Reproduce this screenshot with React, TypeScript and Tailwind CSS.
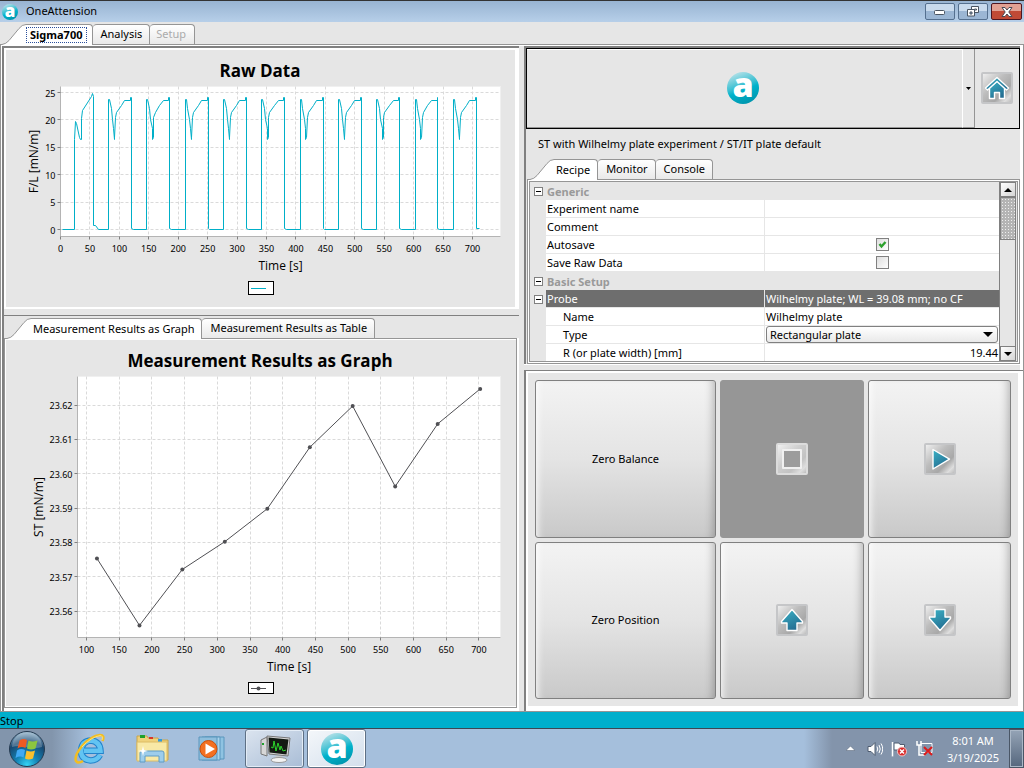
import type { ReactNode } from "react";

const Logo = ({ size, id }: { size: number; id: string }) => (
  <svg width={size} height={size} viewBox="0 0 32 32" className="block shrink-0 overflow-visible">
    <defs>
      <linearGradient id={id} x1="0.2" y1="0" x2="0.6" y2="1">
        <stop offset="0" stopColor="#c0e4ea" />
        <stop offset="0.45" stopColor="#3cc0d2" />
        <stop offset="0.6" stopColor="#00b2cb" />
        <stop offset="1" stopColor="#0096ae" />
      </linearGradient>
    </defs>
    <circle cx="16" cy="16" r="16" fill={`url(#${id})`} />
    <text
      x="16"
      y="25"
      textAnchor="middle"
      fontSize="34"
      fontWeight="800"
      fill="#fff"
      fontFamily="Open Sans, Noto Sans, sans-serif"
    >
      a
    </text>
  </svg>
);

const IconTile = ({ id, muted, children }: { id: string; muted?: boolean; children: ReactNode }) => (
  <svg width="32" height="32" viewBox="0 0 32 32" className="block shrink-0">
    <defs>
      <linearGradient id={`${id}-bg`} x1="0" y1="0" x2="1" y2="1">
        <stop offset="0" stopColor="#f2f2f2" />
        <stop offset="0.4" stopColor={muted ? "#cfcfcf" : "#bdbdbd"} />
        <stop offset="0.68" stopColor={muted ? "#c2c2c2" : "#a8a8a8"} />
        <stop offset="0.85" stopColor="#dedede" />
        <stop offset="1" stopColor="#b4b4b4" />
      </linearGradient>
      <linearGradient id={`${id}-fg`} x1="0" y1="0" x2="0.5" y2="1">
        <stop offset="0" stopColor="#3bb3c6" />
        <stop offset="1" stopColor="#256f93" />
      </linearGradient>
    </defs>
    <rect
      x="1"
      y="1"
      width="30"
      height="30"
      rx="1"
      fill={`url(#${id}-bg)`}
      stroke={muted ? "#dcdcdc" : "#c5c6c8"}
      strokeWidth="2"
    />
    <g fill={`url(#${id}-fg)`} stroke="#fff" strokeWidth="1.4" strokeLinejoin="round">
      {children}
    </g>
  </svg>
);

type TabProps = { label: string; active?: boolean; bold?: boolean; disabled?: boolean };

const Tab = ({ label, active, bold, disabled }: TabProps) => {
  if (active) {
    return (
      <button type="button" role="tab" aria-selected="true" className="relative -mb-px flex h-[21px] items-stretch">
        <svg width="24" height="21" viewBox="0 0 24 21" className="block shrink-0">
          <path d="M0 21V20.5Q4 20 7 16.5L17 4.5Q20 .5 24 .5V21Z" fill="#fff" />
          <path d="M0 20.5Q4 20 7 16.5L17 4.5Q20 .5 24 .5" fill="none" stroke="#959595" />
        </svg>
        <span className="flex items-center rounded-tr-[4px] border-t border-r border-[#959595] bg-white pr-[5px]">
          {bold ? (
            <span className="border border-dotted border-[#2a4f9c] px-[3px] leading-[14px] font-bold">{label}</span>
          ) : (
            <span className="px-[2px]">{label}</span>
          )}
        </span>
      </button>
    );
  }
  return (
    <button
      type="button"
      role="tab"
      aria-selected="false"
      disabled={disabled}
      className="h-5 rounded-t-[4px] border-t border-r border-[#959595] bg-linear-to-b from-white to-[#e9e9e9] pr-[7px] pl-2 disabled:pr-2 disabled:pl-[6px] disabled:text-[#ababab]"
    >
      {label}
    </button>
  );
};

// raw force curve: seconds / mN/m
const FIRST_CYCLE = [
  [4, 0], [24, 0], [24, 16.5], [25.5, 19.8], [27.5, 19.3], [33, 16.8], [33.5, 16.4], [35.5, 16.4],
  [36, 20.2], [38, 21.7], [53, 24.2], [54, 24.9], [55.5, 24.2], [55.5, 0.8], [59, 0.7], [65, 0],
];
const CYCLE = [
  [0, 0], [0, 23.7], [2, 23.7], [4.5, 22], [7, 20], [9, 18.5], [10, 16.5], [11, 16.8], [12, 20.4],
  [14, 21.3], [22, 22.7], [28, 23.6], [37.5, 23.6], [37.5, 24.1], [39, 24.1], [39, 0.2], [42, 0],
];
const rawPoints = [
  ...FIRST_CYCLE,
  ...Array.from({ length: 10 }, (_, i) => CYCLE.map(([t, f]) => [t + 81.5 + i * 65.1, f])).flat(),
];
rawPoints[rawPoints.length - 1] = [712, 0.2];

const resultPoints = [
  [116, 23.5753], [181, 23.5558], [246.5, 23.5721], [311.5, 23.5802], [376.5, 23.5898],
  [441.5, 23.6077], [507, 23.6197], [572, 23.5963], [637, 23.6145], [702, 23.6247],
];

type ChartProps = {
  title: string;
  yLabel: string;
  width: number;
  height: number;
  titleX: number;
  plot: { left: number; top: number; right: number; bottom: number };
  xTicks: number[];
  yTicks: number[];
  digits: number;
  sx: (v: number) => number;
  sy: (v: number) => number;
  points: number[][];
  color: string;
  markers?: boolean;
};

// centre of the pixel a value falls in, keeps the grid lines crisp
const snap = (v: number) => Math.floor(v + 0.01) + 0.5;

const Chart = ({ title, yLabel, width, height, titleX, plot, xTicks, yTicks, digits, sx, sy, points, color, markers }: ChartProps) => {
  const midY = (plot.top + plot.bottom) / 2;
  const midX = (plot.left + plot.right) / 2;
  return (
    <svg
      role="img"
      aria-label={title}
      viewBox={`0 0 ${width} ${height}`}
      className="block h-auto w-full bg-[#e6e6e6]"
      fontFamily="Open Sans, Noto Sans, sans-serif"
    >
      <text x={titleX} y="27" textAnchor="middle" fontSize="17" fontWeight="700">
        {title}
      </text>
      <rect
        x={plot.left}
        y={plot.top}
        width={plot.right - plot.left}
        height={plot.bottom - plot.top}
        fill="#fff"
        stroke="#f0f0f0"
      />
      <g stroke="#dadada" strokeDasharray="3 2">
        {xTicks.map((t) => (
          <line key={t} x1={snap(sx(t))} x2={snap(sx(t))} y1={plot.top} y2={plot.bottom} />
        ))}
        {yTicks.map((t) => (
          <line key={t} x1={plot.left} x2={plot.right} y1={snap(sy(t))} y2={snap(sy(t))} />
        ))}
      </g>
      <path d={`M${plot.left} ${plot.top}V${plot.bottom}H${plot.right}`} fill="none" stroke="#b4b4b4" />
      <g fontSize="9" fontFamily="Noto Sans, Open Sans, sans-serif">
        {xTicks.map((t) => (
          <g key={t}>
            <path d={`M${snap(sx(t))} ${plot.bottom}v3`} stroke="#808080" />
            <text x={sx(t)} y={plot.bottom + 15} textAnchor="middle">
              {t}
            </text>
          </g>
        ))}
        {yTicks.map((t) => (
          <g key={t}>
            <path d={`M${plot.left} ${snap(sy(t))}h-3`} stroke="#808080" />
            <text x={plot.left - 5} y={sy(t) + 4} textAnchor="end">
              {t.toFixed(digits)}
            </text>
          </g>
        ))}
      </g>
      <g fontSize="12">
        <text x={midX} y={plot.bottom + 33} textAnchor="middle">
          Time [s]
        </text>
        <text transform={`translate(${plot.left - (markers ? 35 : 23)} ${midY}) rotate(-90)`} textAnchor="middle">
          {yLabel}
        </text>
      </g>
      <polyline
        points={points.map(([x, y]) => (markers ? `${sx(x)},${sy(y)}` : `${snap(sx(x))},${snap(sy(y))}`)).join(" ")}
        fill="none"
        stroke={color}
      />
      {markers && points.map(([x, y]) => <circle key={x} cx={sx(x)} cy={sy(y)} r="2" fill={color} />)}
      <rect x="242.5" y={height - (markers ? 23.5 : 25.5)} width="25" height={markers ? 11 : 13} fill="#fff" stroke="#000" />
      <path d={`M245 ${height - (markers ? 17.5 : 18.5)}h15`} stroke={color} />
      {markers && <circle cx="252.5" cy={height - 17.5} r="2" fill={color} />}
    </svg>
  );
};

const range = (from: number, count: number, step: number) => Array.from({ length: count }, (_, i) => from + i * step);

const CollapseButton = ({ label }: { label: string }) => (
  <button
    type="button"
    aria-label={`Collapse ${label}`}
    className="mx-auto flex size-[9px] items-center justify-center border border-[#808080] bg-white"
  >
    <span className="h-px w-[5px] bg-black" />
  </button>
);

const CategoryRow = ({ label }: { label: string }) => (
  <tr className="h-[18px]">
    <td className="p-0">
      <CollapseButton label={label} />
    </td>
    <th colSpan={2} scope="rowgroup" className="p-0 pl-px text-left leading-[17px] font-bold text-[#999]">
      {label}
    </th>
  </tr>
);

type RowProps = { label: string; children?: ReactNode; nested?: boolean; selected?: boolean };

const PropertyRow = ({ label, children, nested, selected }: RowProps) => (
  <tr className="h-[18px]">
    <td className="p-0">{selected && <CollapseButton label={label} />}</td>
    <th
      scope="row"
      className={`border-r border-b border-[#e6e6e6] p-0 text-left leading-[17px] font-normal ${nested ? "pl-[17px]" : "pl-px"} ${selected ? "bg-[#6e6e6e] text-white" : "bg-white"}`}
    >
      {label}
    </th>
    <td className={`border-b border-[#e6e6e6] p-0 px-px leading-[17px] ${selected ? "bg-[#6e6e6e] text-white" : "bg-white"}`}>
      {children}
    </td>
  </tr>
);

const Check = ({ label, checked }: { label: string; checked?: boolean }) => (
  <span className="relative mx-auto block size-[13px]">
    <input
      type="checkbox"
      aria-label={label}
      defaultChecked={checked}
      className="peer block size-[13px] appearance-none border border-[#808080] bg-linear-to-br from-[#dedede] to-white"
    />
    <svg viewBox="0 0 13 13" className="pointer-events-none absolute inset-0 hidden peer-checked:block">
      <path d="M3.5 6L5.5 8.5L9.5 4" fill="none" stroke="#2ca02c" strokeWidth="2.4" />
    </svg>
  </span>
);

const ScrollButton = ({ label, d }: { label: string; d: string }) => (
  <button
    type="button"
    aria-label={label}
    className="flex h-[15px] shrink-0 items-center justify-center border border-[#808080] bg-linear-to-br from-white to-[#d5d5d5]"
  >
    <svg width="8" height="4" viewBox="0 0 8 4">
      <path d={d} />
    </svg>
  </button>
);

const ActionButton = ({ label, children, pressed }: { label: string; children: ReactNode; pressed?: boolean }) => (
  <button
    type="button"
    aria-label={label}
    disabled={pressed}
    className="flex min-h-[120px] items-center justify-center rounded-[3px] border border-[#808080] bg-linear-to-b from-[#f3f3f3] via-[#e4e4e4] to-[#c9c9c9] shadow-[inset_8px_0_7px_-6px_#ffffffcc,inset_-8px_0_8px_-6px_#00000040] disabled:border-[#969696] disabled:bg-[#969696] disabled:bg-none disabled:shadow-none"
  >
    {children}
  </button>
);

const TitleBar = () => (
  <header className="flex h-[22px] shrink-0 items-center border-t border-[#333] bg-linear-to-b from-[#98b4d2] to-[#b7cfe9] px-[2px]">
    <Logo size={16} id="logo-title" />
    <span className="ml-2 flex-1">OneAttension</span>
    <div className="flex gap-[3px]">
      <button
        type="button"
        aria-label="Minimize"
        className="flex h-[17px] w-[30px] items-center justify-center rounded-[2px] border border-[#55708f] bg-linear-to-b from-[#c8daed] from-50% to-[#9bb6d4] to-50%"
      >
        <svg width="12" height="6" viewBox="0 0 12 6">
          <rect x="0.5" y="1.5" width="10" height="4" rx="1" fill="#fff" stroke="#4a5562" />
        </svg>
      </button>
      <button
        type="button"
        aria-label="Restore"
        className="flex h-[17px] w-[30px] items-center justify-center rounded-[2px] border border-[#55708f] bg-linear-to-b from-[#c8daed] from-50% to-[#9bb6d4] to-50%"
      >
        <svg width="12" height="11" viewBox="0 0 12 11" stroke="#4a5562">
          <path d="M4.5.5h7v6h-7zM7.5 3h2v1h-2z" fill="#fff" />
          <path d="M.5 3.5h7v6.5h-7z" fill="#fff" />
          <path d="M3 6h2v2h-2z" fill="#9bb6d4" />
        </svg>
      </button>
      <button
        type="button"
        aria-label="Close"
        className="flex h-[17px] w-[31px] items-center justify-center rounded-[2px] border border-[#4d1620] bg-linear-to-b from-[#e2a193] from-50% to-[#c04a36] to-50%"
      >
        <svg width="12" height="10" viewBox="0 0 12 10">
          <path d="M1 .5h3L6 3L8 .5h3L7.8 5L11 9.5H8L6 7L4 9.5H1L4.2 5Z" fill="#fff" stroke="#4a4a55" />
        </svg>
      </button>
    </div>
  </header>
);

const LeftPane = () => (
  <div className="flex min-w-0 flex-col border-t-2 border-l-2 border-[#808080] bg-white">
    <div className="py-[2px] pr-1 pl-[2px]">
      <Chart
        title="Raw Data"
        yLabel="F/L [mN/m]"
        width={509}
        height={257}
        titleX={254}
        plot={{ left: 54.5, top: 36.5, right: 494.5, bottom: 186.5 }}
        xTicks={range(0, 15, 50)}
        yTicks={range(0, 6, 5)}
        digits={0}
        sx={(v) => 54.5 + v * 0.5886}
        sy={(v) => 179.5 - v * 5.48}
        points={rawPoints}
        color="#00afc8"
      />
    </div>
    <div className="h-[6px] bg-[#e6e6e6]" />
    <div className="flex flex-1 flex-col border-t border-[#808080] pb-[3px]">
      <div role="tablist" className="flex h-[22px] items-end bg-[#e6e6e6] pl-[3px]">
        <Tab label="Measurement Results as Graph" active />
        <Tab label="Measurement Results as Table" />
      </div>
      <div className="mr-[2px] flex-1 border border-[#959595] bg-[#e6e6e6]">
        <div className="border-y border-l border-white">
          <Chart
            title="Measurement Results as Graph"
            yLabel="ST [mN/m]"
            width={510}
            height={366}
            titleX={254}
            plot={{ left: 71.5, top: 36.5, right: 494.5, bottom: 297.5 }}
            xTicks={range(100, 13, 50)}
            yTicks={range(23.56, 7, 0.01)}
            digits={2}
            sx={(v) => 80.5 + (v - 100) * 0.654}
            sy={(v) => 271 - (v - 23.56) * 3433}
            points={resultPoints}
            color="#505054"
            markers
          />
        </div>
      </div>
    </div>
  </div>
);

const RecipeTable = () => (
  <div className="ml-px border border-[#959595] bg-white p-px">
    <div className="flex h-[181px] overflow-hidden border border-[#959595] bg-[#e6e6e6]">
      <div className="min-w-0 flex-1 overflow-hidden">
        <table className="w-full table-fixed border-separate border-spacing-0">
          <colgroup>
            <col className="w-4" />
            <col className="w-[219px]" />
            <col />
          </colgroup>
          <tbody>
            <CategoryRow label="Generic" />
            <PropertyRow label="Experiment name" />
            <PropertyRow label="Comment" />
            <PropertyRow label="Autosave">
              <Check label="Autosave" checked />
            </PropertyRow>
            <PropertyRow label="Save Raw Data">
              <Check label="Save Raw Data" />
            </PropertyRow>
            <CategoryRow label="Basic Setup" />
            <PropertyRow label="Probe" selected>
              Wilhelmy plate; WL = 39.08 mm; no CF
            </PropertyRow>
            <PropertyRow label="Name" nested>
              Wilhelmy plate
            </PropertyRow>
            <PropertyRow label="Type" nested>
              <span className="relative block">
                <select
                  aria-label="Type"
                  className="block h-[17px] w-full appearance-none rounded-[3px] border border-[#808080] bg-linear-to-b from-white to-[#e9e9e9] pl-[3px] leading-[14px]"
                >
                  <option>Rectangular plate</option>
                </select>
                <svg viewBox="0 0 10 5" className="pointer-events-none absolute top-[6px] right-[5px] h-[5px] w-[10px]">
                  <path d="M0 0h10L5 5z" />
                </svg>
              </span>
            </PropertyRow>
            <PropertyRow label="R (or plate width) [mm]" nested>
              <span className="block text-right">19.44</span>
            </PropertyRow>
          </tbody>
        </table>
      </div>
      <div className="flex w-[18px] flex-col border-l border-[#808080] pr-px">
        <ScrollButton label="Scroll up" d="M0 4L4 0L8 4z" />
        <div className="h-[43px] border border-[#808080] bg-[#b4b4b4] bg-[radial-gradient(#eeeeee_1px,transparent_1px)] bg-size-[3px_3px]" />
        <div className="flex-1 border-r border-[#808080]" />
        <ScrollButton label="Scroll down" d="M0 0L4 4L8 0z" />
      </div>
    </div>
  </div>
);

const RightPane = () => (
  <div className="flex min-w-0 flex-col">
    <div className="mr-[3px] border-t-2 border-l-2 border-[#808080] bg-[#e6e6e6]">
      <div className="flex h-[81px] items-stretch border border-black">
        <button
          type="button"
          aria-label="Experiments"
          className="flex flex-1 items-center justify-center border-t border-r border-b border-white border-b-[#959595] pr-1 pb-[2px]"
        >
          <Logo size={32} id="logo-main" />
        </button>
        <button
          type="button"
          aria-label="More experiments"
          className="flex w-3 items-center justify-center border-r border-b border-[#959595]"
        >
          <svg width="5" height="3" viewBox="0 0 5 3">
            <path d="M0 0h5L2.5 3z" />
          </svg>
        </button>
        <button type="button" aria-label="Home" className="flex w-11 items-center justify-center pb-[2px]">
          <IconTile id="home">
            <path d="M8.5 16v10.5h5v-6h5v6h5V16L16 9Z" />
            <path d="M4.5 16L16 5.5L27.5 16L25.5 18L16 9.5L6.5 18Z" />
          </IconTile>
        </button>
      </div>
      <p className="py-1 pl-3 leading-[22px]">ST with Wilhelmy plate experiment / ST/IT plate default</p>
      <div role="tablist" className="flex h-5 items-end pl-1">
        <Tab label="Recipe" active />
        <Tab label="Monitor" />
        <Tab label="Console" />
      </div>
      <RecipeTable />
    </div>
    <div className="mt-px mr-[3px] h-[5px] bg-[#e6e6e6]" />
    <div className="flex flex-1 border-t border-l-2 border-[#808080]">
      <div className="grid flex-1 grid-cols-[181fr_144fr_143fr] grid-rows-2 gap-1 border-t-2 border-r-5 border-b-5 border-l-2 border-white bg-[#e6e6e6] p-[7px]">
        <ActionButton label="Zero Balance">Zero Balance</ActionButton>
        <ActionButton label="Stop" pressed>
          <IconTile id="stop" muted>
            <rect x="7" y="7" width="18" height="18" fill="#9c9c9c" stroke="#f0f0f0" strokeWidth="2" />
          </IconTile>
        </ActionButton>
        <ActionButton label="Start">
          <IconTile id="play">
            <path d="M9 6.5V26L25.5 16.2Z" />
          </IconTile>
        </ActionButton>
        <ActionButton label="Zero Position">Zero Position</ActionButton>
        <ActionButton label="Move up">
          <IconTile id="up">
            <path d="M16 5.5L26.5 17.5V19H21V26.5H11V19H5.5V17.5Z" />
          </IconTile>
        </ActionButton>
        <ActionButton label="Move down">
          <IconTile id="down">
            <path d="M16 26.5L26.5 14.5V13H21V5.5H11V13H5.5V14.5Z" />
          </IconTile>
        </ActionButton>
      </div>
    </div>
  </div>
);

const StartOrb = () => (
  <svg width="38" height="38" viewBox="0 0 38 38">
    <defs>
      <radialGradient id="orb" cx="0.5" cy="0.95" r="0.9">
        <stop offset="0" stopColor="#35d4f5" />
        <stop offset="0.35" stopColor="#1483b5" />
        <stop offset="0.75" stopColor="#174770" />
        <stop offset="1" stopColor="#7fa3bd" />
      </radialGradient>
    </defs>
    <circle cx="19" cy="19" r="17.5" fill="url(#orb)" stroke="#253a50" />
    <path d="M4 17A15 15 0 0 1 34 17Q27 19 19 17T4 17Z" fill="#fff" opacity="0.25" />
    <path d="M11.5 10.5Q15.5 8 19 10L17.5 18Q13.5 16 9.5 18.5Z" fill="#ee5a24" />
    <path d="M20.5 10.5Q24.5 12.5 29.5 10.5L27.5 18.5Q23 20.5 19 18.5Z" fill="#8cc63f" />
    <path d="M9 20.5Q13 18 17 20L15.5 27.5Q12 25.5 7.5 28Z" fill="#3fa9f5" />
    <path d="M18.5 20.5Q23 22.5 27 20.5L25 28.5Q20.5 30.5 17 28.5Z" fill="#fbc02d" />
  </svg>
);

const BrowserGlobe = () => (
  <svg width="32" height="32" viewBox="0 0 32 32" fill="none">
    <path
      d="M26 22Q23 27.5 16.5 27.5Q7 26.5 7 17.5Q8 8 17 7.5Q26 8.5 26.5 17.8H10"
      stroke="#2384cc"
      strokeWidth="6.5"
    />
    <path
      d="M26 22Q23 27.5 16.5 27.5Q7 26.5 7 17.5Q8 8 17 7.5Q26 8.5 26.5 17.8H10"
      stroke="#62c4f2"
      strokeWidth="4.5"
    />
    <path d="M28.5 8Q31 2 26 2Q17 3 8 13Q0 23 2 28Q4 31 9 28" stroke="#f2bd22" strokeWidth="2.6" />
    <path d="M28 7Q29.5 2.6 26 2.6Q17 4 8 14" stroke="#fbe27a" />
  </svg>
);

const Folder = () => (
  <svg width="34" height="32" viewBox="0 0 34 32">
    <path d="M2 3h10l1 2h10l1 2h9v20H2Z" fill="#efd27b" stroke="#c9a44a" />
    <path d="M5 2h5v3H5z" fill="#1fa02c" />
    <path d="M14 4h4v2h-4z" fill="#d8372a" />
    <path d="M23 6h4v3h-4z" fill="#2f9be0" />
    <path d="M2 9h30v19H2Z" fill="#f8e9a6" stroke="#dcbc64" />
    <path d="M5 29v-9q0-2 2-2h20q2 0 2 2v9h-5v-6H10v6Z" fill="#9dcdeb" stroke="#5f9cc5" />
    <path d="M8 13l1 4l4 1l-4 1l-1 4l-1-4l-4-1l4-1Z" fill="#fff" />
  </svg>
);

const MediaPlayer = () => (
  <svg width="30" height="28" viewBox="0 0 30 28">
    <path d="M7 2h19v22H7z" fill="#8fc3e2" stroke="#5a96bd" />
    <path d="M4 2h18v23H4z" fill="#a9d4ec" stroke="#5a96bd" />
    <path d="M1 2h18v23H1z" fill="#8fbfdd" stroke="#5a96bd" />
    <circle cx="10.5" cy="14" r="8.5" fill="#f37021" stroke="#c8500c" />
    <path d="M7.5 8.5v11L17 14z" fill="#fff" />
  </svg>
);

const Monitor = () => (
  <svg width="32" height="30" viewBox="0 0 32 30">
    <path d="M2 6l6-3v19l-6-2z" fill="#d7d7d7" stroke="#777" />
    <path d="M8 2l23 2l-2 18l-19-2z" fill="#d8d8d8" stroke="#777" />
    <path d="M9.5 3.5l20 2l-2 15l-17-2z" fill="#131a13" />
    <path d="M12 13l2 1l1-7l2 10l2-8l2 7l1-4l2 5l3-1" fill="none" stroke="#2bd62b" />
    <path d="M17 22h6l1 3h-8z" fill="#c9c9c9" />
    <ellipse cx="20" cy="26" rx="8" ry="2.5" fill="#f3f3f3" stroke="#999" />
    <path d="M4 9v2" stroke="#1fa02c" strokeWidth="2" />
  </svg>
);

const Taskbar = () => (
  <footer className="flex h-10 shrink-0 items-center border-t border-[#3d4652] bg-[linear-gradient(90deg,#8295ac_0,#8295ac_52px,#a5bfdc_88px,#a5bfdc_calc(100%-220px),#8394ab_calc(100%-192px),#8394ab_100%)] pl-2">
    <button type="button" aria-label="Start menu" className="w-[38px]">
      <StartOrb />
    </button>
    <div className="ml-7 flex flex-1 items-center">
      <button type="button" aria-label="Web browser" className="flex w-[61px] justify-start">
        <BrowserGlobe />
      </button>
      <button type="button" aria-label="File explorer" className="flex w-[63px] justify-start">
        <Folder />
      </button>
      <button type="button" aria-label="Media player" className="flex w-[47px] justify-start">
        <MediaPlayer />
      </button>
      <div className="flex gap-[3px]">
        <button
          type="button"
          aria-label="Device monitor"
          className="flex h-[39px] w-[59px] items-center justify-center rounded-[3px] border border-[#5e7085] bg-linear-to-br from-[#dbe4ef] to-[#a9bdd6] shadow-[inset_0_0_0_1px_#e3ecf6]"
        >
          <Monitor />
        </button>
        <button
          type="button"
          aria-label="OneAttension window"
          className="flex h-[39px] w-[59px] items-center justify-center rounded-[3px] border border-[#5e7085] bg-linear-to-br from-[#f4f7fa] to-[#d3dfec] shadow-[inset_0_0_0_1px_#fff]"
        >
          <Logo size={32} id="logo-task" />
        </button>
      </div>
    </div>
    <div className="mr-[5px] flex items-center gap-2 text-white">
      <button type="button" aria-label="Show hidden icons" className="mr-1">
        <svg width="9" height="5" viewBox="0 0 9 5" className="block">
          <path d="M0 4.5L4.5 0L9 4.5z" fill="#fff" stroke="#4f5d70" strokeWidth="0.5" />
        </svg>
      </button>
      <svg width="16" height="16" viewBox="0 0 16 16" role="img" aria-label="Volume">
        <path d="M1 5.5h3L8 1.5v13L4 10.5H1z" fill="#fff" stroke="#4f5d70" />
        <path d="M10 5.5q1.5 2.5 0 5M12 4q2.5 4 0 8M14 2.5q3.5 5.5 0 11" fill="none" stroke="#fff" />
      </svg>
      <svg width="17" height="16" viewBox="0 0 17 16" role="img" aria-label="Action center">
        <path d="M1.5 1v14.5M3 2h5l1 1.5h4.5v7H9L8 9H3z" fill="#fff" stroke="#4f5d70" />
        <path d="M1.5 1v14.5" stroke="#fff" strokeWidth="1.5" />
        <circle cx="11" cy="10.5" r="4.5" fill="#d92c2c" stroke="#f4c9c9" />
        <path d="M9 8.5l4 4m0-4l-4 4" stroke="#fff" strokeWidth="1.5" />
      </svg>
      <svg width="17" height="17" viewBox="0 0 17 17" role="img" aria-label="Network disconnected">
        <path d="M5 3.5h11v9H5z" fill="#8394ab" stroke="#fff" />
        <path d="M1 1v4h4V1M3 5v10h6" fill="none" stroke="#fff" strokeWidth="1.5" />
        <path d="M8 7l8 8m0-8l-8 8" stroke="#dd1c1c" strokeWidth="2" />
      </svg>
      <div className="ml-px w-[62px] text-center leading-[17px]">
        <div>8:01 AM</div>
        <div>3/19/2025</div>
      </div>
    </div>
    <button
      type="button"
      aria-label="Show desktop"
      className="h-[39px] w-[15px] border border-[#4a5666] bg-linear-to-b from-[#95a4b6] to-[#56677e] shadow-[inset_0_0_0_1px_#aab7c6]"
    />
  </footer>
);

const App = () => {
  return (
    <div className="flex min-h-screen flex-col bg-[#e6e6e6] font-['Noto_Sans','Open_Sans',sans-serif] text-[11px] text-black">
      <TitleBar />
      <div role="tablist" className="flex h-[22px] shrink-0 items-end pl-[2px]">
        <Tab label="Sigma700" active bold />
        <Tab label="Analysis" />
        <Tab label="Setup" disabled />
      </div>
      <main className="grid flex-1 grid-cols-[517fr_5px_499fr] border border-[#959595] bg-white pt-px pl-px">
        <LeftPane />
        <div className="bg-[#e6e6e6]" />
        <RightPane />
      </main>
      <div role="status" className="h-4 shrink-0 bg-[#00afcc] leading-[17px]">
        Stop
      </div>
      <Taskbar />
    </div>
  );
};

export default App;
